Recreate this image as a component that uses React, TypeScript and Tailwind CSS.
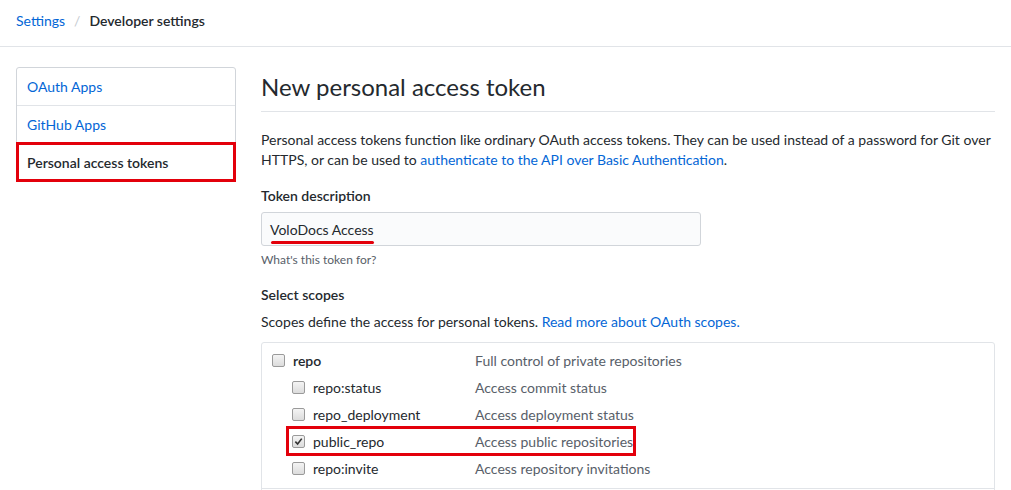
import React from "react";

const font = { fontFamily: 'Lato, "Liberation Sans", Arial, sans-serif' };

const Checkbox: React.FC<{ checked?: boolean }> = ({ checked }) => (
  <span className="relative inline-flex h-[13px] w-[13px] shrink-0 items-center justify-center rounded-[2px] border border-[#9a9a9a] bg-gradient-to-b from-[#f4f4f4] to-[#dcdcdc]">
    {checked && (
      <svg viewBox="0 0 10 10" className="h-[9px] w-[9px]">
        <path d="M1.5 5.2 L4 7.8 L8.6 1.8" fill="none" stroke="#333" strokeWidth="1.8" />
      </svg>
    )}
  </span>
);

const scopes = [
  { name: "repo:status", desc: "Access commit status" },
  { name: "repo_deployment", desc: "Access deployment status" },
  { name: "public_repo", desc: "Access public repositories", checked: true, marked: true },
  { name: "repo:invite", desc: "Access repository invitations" },
];

export default function App() {
  return (
    <div className="h-[490px] w-[1011px] overflow-hidden bg-white text-[14px] text-[#24292e]" style={font}>
      <div className="border-b border-[#e1e4e8] px-4 pb-[15px] pt-[11px] leading-5">
        <a className="text-[#0366d6]">Settings</a>
        <span className="px-[9px] text-[#c6cbd1]">/</span>
        <span className="font-semibold">Developer settings</span>
      </div>

      <div className="flex px-4 pt-5">
        <nav className="h-fit w-[220px] shrink-0 rounded-[3px] border border-[#d1d5da]">
          <div className="flex h-[38px] items-center border-b border-[#e1e4e8] px-[10px] text-[#0366d6]">OAuth Apps</div>
          <div className="flex h-[38px] items-center border-b border-[#e1e4e8] px-[10px] text-[#0366d6]">GitHub Apps</div>
          <div className="relative flex h-[37px] items-center px-[10px] font-semibold">
            Personal access tokens
            <span className="absolute -bottom-px -left-px -right-px -top-[2px] border-[3px] border-[#e3000b]" />
          </div>
        </nav>

        <main className="ml-[25px] w-[734px]">
          <h1 className="mt-1 border-b border-[#e1e4e8] pb-2 text-[24px] font-normal leading-8">New personal access token</h1>
          <p className="mt-[18px] whitespace-nowrap leading-5">
            Personal access tokens function like ordinary OAuth access tokens. They can be used instead of a password for Git over
            <br />
            HTTPS, or can be used to <a className="text-[#0366d6]">authenticate to the API over Basic Authentication</a>.
          </p>

          <div className="mt-4 font-semibold leading-5">Token description</div>
          <div className="relative mt-[6px] flex h-[34px] w-[440px] items-center rounded-[3px] border border-[#d1d5da] bg-[#fafbfc] px-2">
            VoloDocs Access
            <span className="absolute left-[9px] top-[28px] h-[3px] w-[103px] rounded-full bg-[#e3000b]" />
          </div>
          <div className="mt-[5px] text-[12px] leading-[18px] text-[#586069]">What's this token for?</div>

          <div className="mt-4 font-semibold leading-5">Select scopes</div>
          <p className="mt-[7px] leading-5">
            Scopes define the access for personal tokens. <a className="text-[#0366d6]">Read more about OAuth scopes.</a>
          </p>

          <div className="mt-[10px] h-[200px] rounded-t-[3px] border border-[#e1e4e8]">
            <div className="border-b border-[#e1e4e8] pb-[6px] pt-[4px]">
              <div className="flex h-[27px] items-center pl-[10px]">
                <div className="flex w-[203px] items-center gap-[8px]">
                  <Checkbox />
                  <span className="font-semibold">repo</span>
                </div>
                <span className="text-[#586069]">Full control of private repositories</span>
              </div>
              {scopes.map((s) => (
                <div key={s.name} className="relative flex h-[27px] items-center pl-[10px]">
                  <div className="flex w-[203px] items-center gap-[8px] pl-[20px]">
                    <Checkbox checked={s.checked} />
                    <span>{s.name}</span>
                  </div>
                  <span className="text-[#586069]">{s.desc}</span>
                  {s.marked && (
                    <span className="absolute left-[24px] top-[-2px] h-[30px] w-[350px] border-[3px] border-[#e3000b]" />
                  )}
                </div>
              ))}
            </div>
          </div>
        </main>
      </div>
    </div>
  );
}
